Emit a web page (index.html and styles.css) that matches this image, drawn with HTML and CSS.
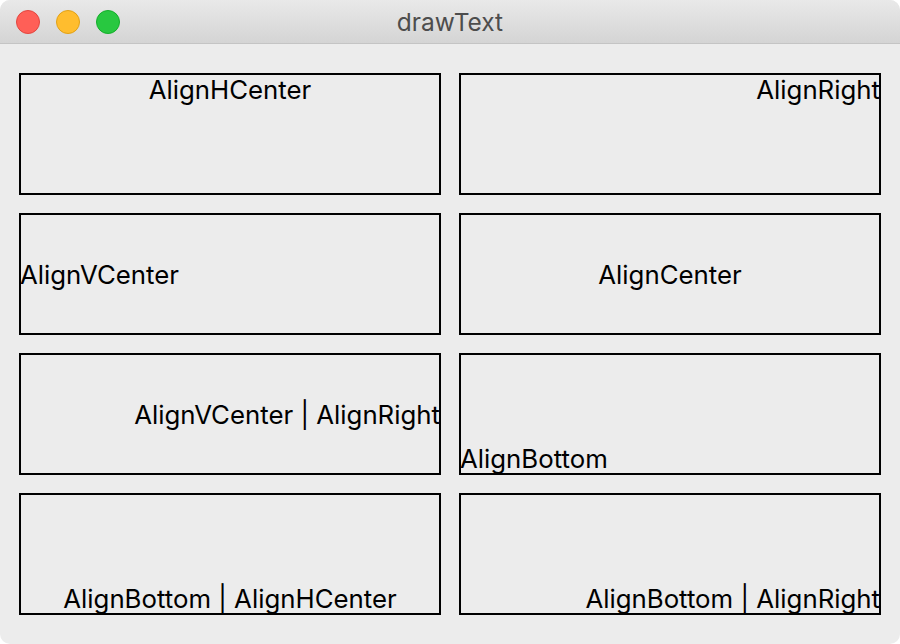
FILE: index.html
```html
<!DOCTYPE html>
<html lang="en">
<head>
    <meta charset="UTF-8">
    <title>drawText</title>
    <link rel="stylesheet" href="styles.css">
</head>
<body>
    <div class="window">
        <div class="titlebar">
            <div class="lights">
                <span class="light red"></span>
                <span class="light yellow"></span>
                <span class="light green"></span>
            </div>
            <div class="title">drawText</div>
        </div>

        <!-- one box per alignment flag combination -->
        <div class="canvas">
            <div class="box top hcenter"><span>AlignHCenter</span></div>
            <div class="box top right"><span>AlignRight</span></div>
            <div class="box vcenter left"><span>AlignVCenter</span></div>
            <div class="box vcenter hcenter"><span>AlignCenter</span></div>
            <div class="box vcenter right"><span>AlignVCenter | AlignRight</span></div>
            <div class="box bottom left"><span>AlignBottom</span></div>
            <div class="box bottom hcenter"><span>AlignBottom | AlignHCenter</span></div>
            <div class="box bottom right"><span>AlignBottom | AlignRight</span></div>
        </div>
    </div>
</body>
</html>
```

FILE: styles.css
```css
html, body {
    margin: 0;
    padding: 0;
    background: #ffffff;
}
.window {
    width: 900px;
    height: 644px;
    background: #ececec;
    border-radius: 10px;
    overflow: hidden;
    font-family: Inter, "Liberation Sans", sans-serif;
}
.titlebar {
    position: relative;
    height: 43px;
    background: linear-gradient(#e9e9e9, #d4d4d4);
    border-bottom: 1px solid #c4c4c4;
    display: flex;
    align-items: center;
    justify-content: center;
}
.lights {
    position: absolute;
    left: 16px;
    top: 10px;
    display: flex;
    gap: 16px;
}
.light {
    width: 22px;
    height: 22px;
    border-radius: 50%;
    border: 1px solid;
}
.light.red {
    background: #ff5f57;
    border-color: #e2463f;
}
.light.yellow {
    background: #ffbd2e;
    border-color: #e1a116;
}
.light.green {
    background: #28c840;
    border-color: #14ae2a;
}
.title {
    font-size: 24.5px;
    color: #4d4d4d;
}
.canvas {
    display: grid;
    grid-template-columns: 420px 420px;
    grid-template-rows: repeat(4, 120px);
    gap: 20px;
    padding: 30px 20px 0 20px;
}
.box {
    display: flex;
    box-shadow: 0 0 0 1px #000, inset 0 0 0 1px #000;
    font-size: 25.8px;
    color: #000;
    white-space: nowrap;
}
.box.top { align-items: flex-start; }
.box.vcenter { align-items: center; }
.box.bottom { align-items: flex-end; }
.box.left { justify-content: flex-start; }
.box.hcenter { justify-content: center; }
.box.right { justify-content: flex-end; }
```
